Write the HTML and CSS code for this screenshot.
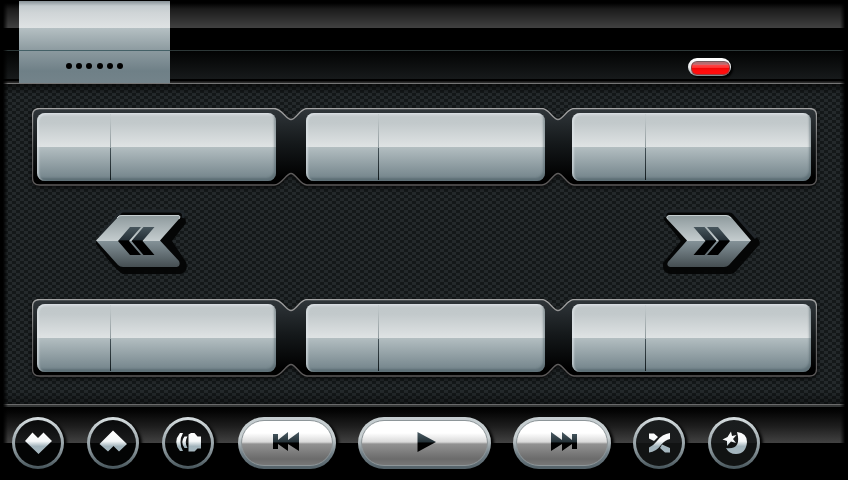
FILE: index.html
```html
<!DOCTYPE html>
<html lang="en">
<head>
<meta charset="utf-8">
<title>Media player</title>
<link rel="stylesheet" href="styles.css">
</head>
<body>
<svg class="defs" width="0" height="0" aria-hidden="true">
  <defs>
    <linearGradient id="frameFill" x1="0" y1="0" x2="0" y2="1"><stop offset="0" stop-color="#30363a"/><stop offset=".45" stop-color="#15191b"/><stop offset=".9" stop-color="#000"/></linearGradient>
    <linearGradient id="frameLine" x1="0" y1="0" x2="0" y2="1"><stop offset="0" stop-color="#a5a5a5"/><stop offset=".5" stop-color="#666"/><stop offset="1" stop-color="#5c5959"/></linearGradient>
    <linearGradient id="metal" x1="0" y1="0" x2="0" y2="1"><stop offset="0" stop-color="#8d999c"/><stop offset=".5" stop-color="#c5cdcf"/><stop offset=".5" stop-color="#849298"/><stop offset="1" stop-color="#454e52"/></linearGradient>
    <linearGradient id="ink" gradientUnits="userSpaceOnUse" x1="0" y1="26" x2="0" y2="56"><stop offset="0" stop-color="#4a5960"/><stop offset=".45" stop-color="#263138"/><stop offset=".5" stop-color="#000"/></linearGradient>
    <linearGradient id="glyph" gradientUnits="userSpaceOnUse" x1="0" y1="15" x2="0" y2="37"><stop offset="0" stop-color="#fff"/><stop offset=".42" stop-color="#f4f7f8"/><stop offset=".65" stop-color="#a2b4bc"/><stop offset="1" stop-color="#a5b6be"/></linearGradient>
    <linearGradient id="dark" gradientUnits="userSpaceOnUse" x1="0" y1="15" x2="0" y2="35"><stop offset="0" stop-color="#4c5d65"/><stop offset=".48" stop-color="#253238"/><stop offset=".56" stop-color="#000"/></linearGradient>
    <path id="frame" d="M7.500 .5H242C250 .5 254 11.500 259 11.500S268 .5 275 .5H510C517 .5 521 11.500 526 11.500S535 .5 542 .5H777.500Q784.500 .5 784.500 7.500V70Q784.500 77 777.500 77H542C535 77 531 65.500 526 65.500S517 77 510 77H275C268 77 264 65.500 259 65.500S250 77 242 77H7.500Q.5 77 .5 70V7.500Q.5 .5 7.500 .5Z" fill="url(#frameFill)" stroke="url(#frameLine)" stroke-width="1.300"/>
  </defs>
</svg>
<div class="screen">
  <header class="header">
    <div class="tab"><div class="dots"><i></i><i></i><i></i><i></i><i></i><i></i></div></div>
    <div class="status"><span class="lamp"></span></div>
  </header>
  <main class="deck">
    <section class="bank">
      <svg class="frame" viewBox="0 0 785 78"><use href="#frame"/></svg>
      <button class="preset" aria-label="Preset 1"></button>
      <button class="preset" aria-label="Preset 2"></button>
      <button class="preset" aria-label="Preset 3"></button>
    </section>
    <nav class="pager">
      <button aria-label="Previous page"><svg width="112" height="82" viewBox="0 0 112 82">
        <path d="M16 41 39 13Q41 11 43 11H98Q106 14 106 23L92 41 106 62Q109 71 101 74H43Q36 71 16 44Z" fill="#050606"/>
        <path d="M19 37 39 14Q41 11 43 11H99Q105 12 103 18" fill="none" stroke="#20262a" stroke-width="3"/>
        <path d="M16 40.500 39 16Q41 15 43 15H98Q102 16 99 19L80 40.500 99 61Q101 66 97 67H43Q40 67 38 65Z" fill="url(#metal)"/>
        <path d="M37 18 39 16Q41 15.500 43 15.500H98Q101 16 99 19" fill="none" stroke="#c5cdd0"/>
        <path d="M38 41 50 27H61L49 41 61 55H50Z" fill="url(#ink)"/>
        <path d="M51.500 41 63.500 27H74.500L62.500 41 74.500 55H63.500Z" fill="url(#ink)"/>
      </svg></button>
      <button aria-label="Next page"><svg width="112" height="82" viewBox="0 0 112 82">
        <path d="M18 12Q12 14 14 20L31 41 13 63Q12 73 20 74H80Q84 74 87 70L109 45Q111 42 108 39L85 13Q83 11 79 11H22Z" fill="#050606"/>
        <path d="M15 17Q14 11 20 11H79Q83 11 85 14L106 38" fill="none" stroke="#202529" stroke-width="3"/>
        <path d="M20 15H76Q79 15 81 17L101 40.500 79 65Q77 67 74 67H20Q16 66 18 62L37 40.500 17 19Q15 16 20 15Z" fill="url(#metal)"/>
        <path d="M18 19Q15 16 20 15.500H76Q79 16 81 18" fill="none" stroke="#c5cdd0"/>
        <path d="M43.500 27H54.500L66.500 41 54.500 55H43.500L55.500 41Z" fill="url(#ink)"/>
        <path d="M57 27H68L80 41 68 55H57L69 41Z" fill="url(#ink)"/>
      </svg></button>
    </nav>
    <section class="bank">
      <svg class="frame" viewBox="0 0 785 78"><use href="#frame"/></svg>
      <button class="preset" aria-label="Preset 4"></button>
      <button class="preset" aria-label="Preset 5"></button>
      <button class="preset" aria-label="Preset 6"></button>
    </section>
  </main>
  <footer class="controls">
    <button class="round" aria-label="Favorite"><svg viewBox="0 0 52 52"><path d="M13 24 20.500 15.500 26 21 31.500 15.500 40 24 26.500 37Z" fill="url(#glyph)"/></svg></button>
    <button class="round" aria-label="Up"><svg viewBox="0 0 52 52"><path d="M26 13.500 40 27 32 34.500 26.500 29 21 34.500 12.500 27Z" fill="url(#glyph)"/></svg></button>
    <button class="round" aria-label="Sound"><svg viewBox="0 0 52 52"><path d="M26.500 17.500 29 16H32.500L35.500 19.500H39V31.500H35.500L32.500 34.500H26.500ZM18 16H21Q16 25 21 34H18Q10.500 25 18 16ZM22.500 19.500H25.500Q22 25 25.500 31H22.500Q18 25 22.500 19.500Z" fill="url(#glyph)"/></svg></button>
    <button class="pill" aria-label="Previous track"><svg viewBox="0 0 52 52"><path d="M12 17H17V23L27 15V23L38 15V34L27 27V34L17 27V32H12Z" fill="url(#dark)"/></svg></button>
    <button class="pill wide" aria-label="Play"><svg viewBox="0 0 52 52"><path d="M18.500 15 37 25 18.500 35Z" fill="url(#dark)"/></svg></button>
    <button class="pill" aria-label="Next track"><svg viewBox="0 0 52 52"><path d="M15 15 26 23V15L36 23V17H41V32H36V27L26 34V27L15 34Z" fill="url(#dark)"/></svg></button>
    <button class="round solid" aria-label="Shuffle"><svg viewBox="0 0 52 52"><path d="M16 16.500H21L25 20 21 24 16 21.500ZM29 27.500 37 31V35.500H32L27 31Z" fill="url(#glyph)"/><path d="M16 35.500V30.500Q20 29 24 24 29 17 37 16V22Q32 23 28 28 23 35 16 35.500Z" fill="url(#glyph)"/></svg></button>
    <button class="round solid" aria-label="Sleep"><svg viewBox="0 0 52 52"><path d="M29 15Q39 16 39 25 38 37 28 37 21 37 18 31 34 33 29 15Z" fill="url(#glyph)"/><path d="M23 14.500 24 19 28.500 18 25 22 28 26 23 24.500 19 29 19 24 14.500 22.500 19.500 20Z" fill="url(#glyph)"/></svg></button>
  </footer>
</div>
</body>
</html>
```
FILE: styles.css
```css
* { box-sizing: border-box; }
body { margin: 0; background: #000; font-family: "Liberation Sans", sans-serif; }
button { padding: 0; margin: 0; border: 0; background: none; display: block; }
svg { display: block; }
.defs { position: absolute; }
.screen { position: relative; width: 848px; height: 480px; overflow: hidden; display: grid; grid-template-rows: 84px 320px 76px; background: #000; }
.screen::after { content: ""; position: absolute; inset: 0; pointer-events: none; background: linear-gradient(90deg, #000 3px, transparent 8px, transparent 840px, #000 845px); }
.header { display: flex; padding: 1px 0 0 19px; background: linear-gradient(#000 0 3px, #1b1b1b 9px, #414141 28px, #000 28px 50px, #2d3838 50px 51px, #020303 51px, #171a1b 79px, #000 79px 81px, #111 81px, #333 83px, #757575 83px); }
.tab { width: 151px; height: 82px; background: linear-gradient(#879197 0, #c3cbce 5px, #d0d5d7 12px, #dfe3e4 27px, #b5c0c3 27px, #8d9ba0 49px, #446067 49px 50px, #8b999f 50px, #6f8087 70px, #73838a); display: flex; align-items: flex-end; justify-content: center; padding-bottom: 14px; }
.dots { display: flex; gap: 4.400px; }
.dots i { width: 6px; height: 6px; border-radius: 50%; background: #000; }
.status { flex: 1; display: flex; justify-content: flex-end; align-items: flex-start; padding: 57px 117px 0 0; }
.lamp { width: 43px; height: 18px; border-radius: 9px; padding: 3px; background: linear-gradient(#fff 2px, #e5e8e9 10px, #7b878c); box-shadow: 2px 2px 2px #000; }
.lamp::before { content: ""; display: block; width: 37px; height: 12px; border-radius: 6px; border: 1px solid #9b3c3c; border-top-color: #775a5d; background: linear-gradient(#b76b6f 2px, #e66569 3px, #ff4546 3px, #fa2e2e 6px, #f50404 6px, #ff0d0d 9px); }
.deck { padding: 24px 31px 0 32px; display: flex; flex-direction: column; background: linear-gradient(#0009, #0000 10px, #0000 307px, #0006), repeating-conic-gradient(#24292b 0 25%, #141819 0 50%) 0 0 / 8px 6px; }
.bank { position: relative; width: 785px; height: 78px; padding: 5px 6px 5px 5px; display: grid; grid-template-columns: 239px 239px 239px; column-gap: 27px; justify-content: space-between; filter: drop-shadow(0 2px 2px #000b); }
.frame { position: absolute; inset: 0; width: 785px; height: 78px; }
.preset { position: relative; height: 68px; border-radius: 8px; background: linear-gradient(#d2d6da 0, #c1c8ca 4px, #c2c9cb 10px, #dfe3e4 34px, #b3bec1 34px, #708188); box-shadow: inset 2px 1px 2px #e1e8eb99, inset -2px -3px 2px #3f505866; }
.preset:nth-of-type(2) { left: 1px; }
.preset::before { content: ""; display: block; width: 1px; height: 66px; margin-left: 73px; background: linear-gradient(#c4cbcd, #8e989b 34px, #435157 34px, #11191c); }
.preset:nth-of-type(2)::before { margin-left: 72px; }
.pager { height: 113px; padding: 14px 55px 0 48px; display: flex; justify-content: space-between; align-items: flex-start; }
.pager button { height: 82px; }
.controls { display: flex; padding: 13px 0 0 12px; background: linear-gradient(#6b6b6b 0 1px, #343636 1px 3px, #000 3px, #050505 8px, #1d1d1d 22px, #424242 39px, #000 39px); }
.controls button { height: 52px; display: flex; justify-content: center; flex: none; padding: 0; }
.controls svg { position: relative; width: 52px; height: 52px; flex: none; }
.round { position: relative; width: 52px; margin-right: 23px; border-radius: 50%; background: linear-gradient(#d8dfe1, #8e9a9f 60%, #46545a); box-shadow: 3px 2px 3px #000; }
.round::before { content: ""; position: absolute; inset: 3px; border-radius: 50%; background: linear-gradient(#08090a, #1c1d1e 23px, #030404 23px); }
.round.solid::before { background: linear-gradient(#191c1d, #1b1d1e 23px, #111313 23px); }
.round:nth-child(3) { margin-right: 24px; }
.pill { position: relative; width: 98px; margin-right: 22px; border-radius: 26px; background: linear-gradient(#c5cdd0, #c8cfd1 40%, #738087 70%, #536168); box-shadow: 3px 2px 3px #000; }
.pill::before { content: ""; position: absolute; inset: 3px; border-radius: 23px; border: 1px solid #8e9699; background: linear-gradient(#fff 0 12px, #d9d9d9 21px, #929292 23px, #6b6b6b 38px, #777); }
.pill.wide { width: 133px; }
```
